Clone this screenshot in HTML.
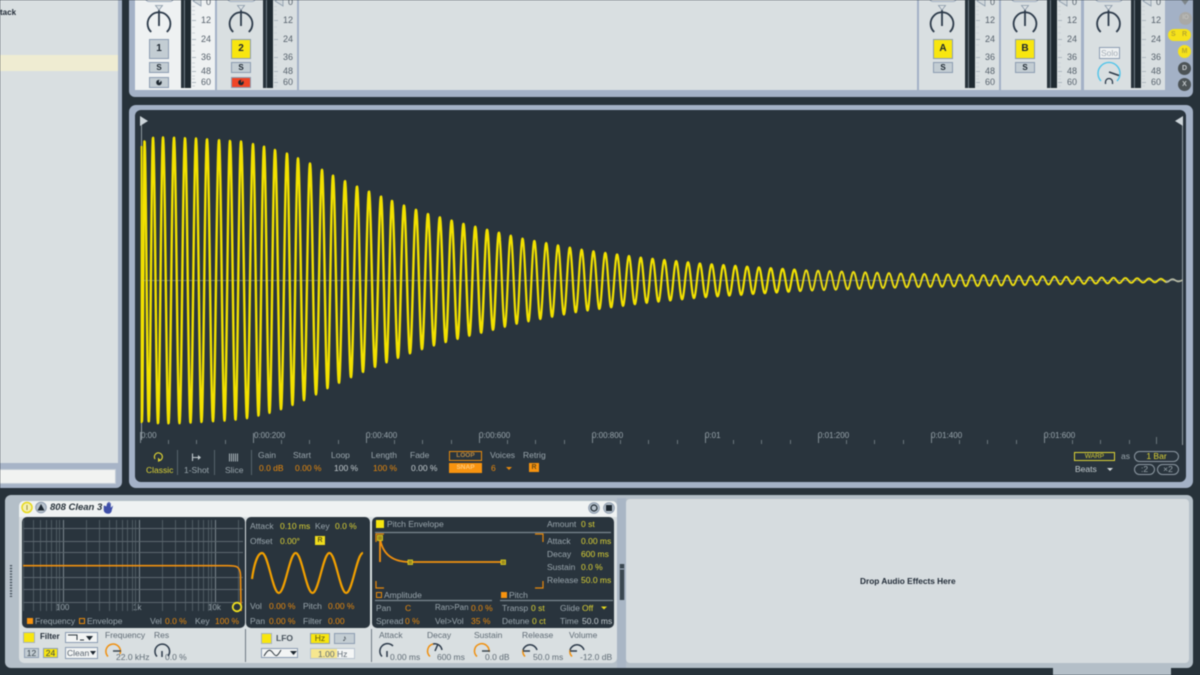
<!DOCTYPE html>
<html><head><meta charset="utf-8"><style>
html,body{margin:0;padding:0;background:#27323a}
#r{position:relative;width:1200px;height:675px;overflow:hidden;background:#27323a;font-family:"Liberation Sans",sans-serif;font-size:8.5px;filter:blur(.4px)}
.b{position:absolute;box-sizing:border-box}
.t{position:absolute;white-space:nowrap;line-height:10px;color:#9aa6ad}
.o{color:#e8890c}.y{color:#dcd234}.w{color:#c4ccd0}.g{color:#5f6b75}.k{color:#222c38;font-weight:bold}
.n{position:absolute;width:20px;text-align:right;line-height:10px;color:#56616c;font-size:9px}
.btn{position:absolute;box-sizing:border-box;border:1px solid #8c9db2;text-align:center;color:#1c2630;font-weight:bold;background:#c3cdd3}
svg{position:absolute;left:0;top:0}
</style></head><body><div id="r">

<!-- left panel -->
<div class="b" style="left:-10px;top:-10px;width:132px;height:498px;background:#a7b4c7;border-radius:6px"></div>
<div class="b" style="left:0;top:0;width:118px;height:463px;background:#d9dfe1"></div>
<div class="b" style="left:0;top:55px;width:118px;height:16px;background:#efecd2"></div>
<div class="t k" style="left:0;top:8px;font-size:8px">tack</div>
<div class="b" style="left:-4px;top:469px;width:120px;height:15px;background:#f1f3f1;border:1px solid #c3ccd6"></div>

<!-- mixer -->
<div class="b" style="left:129px;top:-10px;width:1064px;height:107px;background:#a3b1c6;border-radius:6px"></div>
<div class="b" style="left:135px;top:0;width:80px;height:90px;background:#eef1f2"></div>
<div class="b" style="left:217px;top:0;width:80px;height:90px;background:#d9dfe1"></div>
<div class="b" style="left:299px;top:0;width:618px;height:90px;background:#d9dfe1"></div>
<div class="b" style="left:919px;top:0;width:80px;height:90px;background:#d9dfe1"></div>
<div class="b" style="left:1001px;top:0;width:80px;height:90px;background:#d9dfe1"></div>
<div class="b" style="left:1084px;top:0;width:81px;height:90px;background:#d9dfe1"></div>

<!-- top pills -->
<div class="b" style="left:145px;top:-6px;width:29px;height:8px;background:#f4f6f6;border:1px solid #9aa9bb;border-radius:4px"></div>
<div class="b" style="left:227px;top:-6px;width:29px;height:8px;background:#f4f6f6;border:1px solid #9aa9bb;border-radius:4px"></div>
<div class="b" style="left:929px;top:-6px;width:28px;height:8px;background:#f4f6f6;border:1px solid #9aa9bb;border-radius:4px"></div>
<div class="b" style="left:1011px;top:-6px;width:28px;height:8px;background:#f4f6f6;border:1px solid #9aa9bb;border-radius:4px"></div>
<div class="b" style="left:1095px;top:-6px;width:28px;height:8px;background:#f4f6f6;border:1px solid #9aa9bb;border-radius:4px"></div>

<!-- meters -->
<div class="b" style="left:181px;top:0;width:10px;height:88px;background:linear-gradient(90deg,#27323a 0 3px,#6f7c85 3px 4px,#1f2a31 4px)"></div>
<div class="b" style="left:263px;top:0;width:10px;height:88px;background:linear-gradient(90deg,#27323a 0 3px,#6f7c85 3px 4px,#1f2a31 4px)"></div>
<div class="b" style="left:965px;top:0;width:10px;height:88px;background:linear-gradient(90deg,#27323a 0 3px,#6f7c85 3px 4px,#1f2a31 4px)"></div>
<div class="b" style="left:1047px;top:0;width:10px;height:88px;background:linear-gradient(90deg,#27323a 0 3px,#6f7c85 3px 4px,#1f2a31 4px)"></div>
<div class="b" style="left:1131px;top:0;width:10px;height:88px;background:linear-gradient(90deg,#27323a 0 3px,#6f7c85 3px 4px,#1f2a31 4px)"></div>

<!-- scales -->
<div class="n" style="left:191px;top:-3px">0</div><div class="n" style="left:191px;top:15px">12</div><div class="n" style="left:191px;top:34px">24</div><div class="n" style="left:191px;top:52px">36</div><div class="n" style="left:191px;top:66px">48</div><div class="n" style="left:191px;top:77px">60</div>
<div class="n" style="left:273px;top:-3px">0</div><div class="n" style="left:273px;top:15px">12</div><div class="n" style="left:273px;top:34px">24</div><div class="n" style="left:273px;top:52px">36</div><div class="n" style="left:273px;top:66px">48</div><div class="n" style="left:273px;top:77px">60</div>
<div class="n" style="left:975px;top:-3px">0</div><div class="n" style="left:975px;top:15px">12</div><div class="n" style="left:975px;top:34px">24</div><div class="n" style="left:975px;top:52px">36</div><div class="n" style="left:975px;top:66px">48</div><div class="n" style="left:975px;top:77px">60</div>
<div class="n" style="left:1057px;top:-3px">0</div><div class="n" style="left:1057px;top:15px">12</div><div class="n" style="left:1057px;top:34px">24</div><div class="n" style="left:1057px;top:52px">36</div><div class="n" style="left:1057px;top:66px">48</div><div class="n" style="left:1057px;top:77px">60</div>
<div class="n" style="left:1141px;top:-3px">0</div><div class="n" style="left:1141px;top:15px">12</div><div class="n" style="left:1141px;top:34px">24</div><div class="n" style="left:1141px;top:52px">36</div><div class="n" style="left:1141px;top:66px">48</div><div class="n" style="left:1141px;top:77px">60</div>

<!-- strip buttons -->
<div class="btn" style="left:149px;top:39px;width:20px;height:20px;line-height:18px;font-size:10px">1</div>
<div class="btn" style="left:149px;top:62px;width:20px;height:11px;line-height:9px;font-size:8px">S</div>
<div class="btn" style="left:149px;top:77px;width:20px;height:11px;line-height:9px;font-size:8px"></div>
<div class="btn" style="left:231px;top:39px;width:20px;height:20px;line-height:18px;font-size:10px;background:#f8e60f">2</div>
<div class="btn" style="left:231px;top:62px;width:20px;height:11px;line-height:9px;font-size:8px">S</div>
<div class="btn" style="left:231px;top:77px;width:20px;height:11px;background:#ef4526"></div>
<div class="btn" style="left:933px;top:39px;width:20px;height:20px;line-height:18px;font-size:10px;background:#f8e60f">A</div>
<div class="btn" style="left:933px;top:62px;width:20px;height:11px;line-height:9px;font-size:8px">S</div>
<div class="btn" style="left:1015px;top:39px;width:20px;height:20px;line-height:18px;font-size:10px;background:#f8e60f">B</div>
<div class="btn" style="left:1015px;top:62px;width:20px;height:11px;line-height:9px;font-size:8px">S</div>
<div class="btn" style="left:1099px;top:47px;width:21px;height:12px;line-height:10px;font-size:8.5px;background:#eef1f2;color:#a4adb6;font-weight:normal">Solo</div>

<!-- side buttons -->
<div class="b" style="left:1179px;top:12px;width:13px;height:13px;border-radius:7px;background:#a9a9a6;color:#c8c8c4;font-size:6px;line-height:13px;text-align:center">IO</div>
<div class="b" style="left:1168px;top:29px;width:23px;height:12px;border-radius:6px;background:#f6e21a"></div>
<div class="t" style="left:1171px;top:30px;font-size:7px;font-weight:bold;color:#b9a92b">S</div>
<div class="t" style="left:1182px;top:30px;font-size:7px;font-weight:bold;color:#b9a92b">R</div>
<div class="b" style="left:1178px;top:45px;width:13px;height:13px;border-radius:7px;background:#f6e21a;color:#b9a92b;font-size:7px;line-height:13px;text-align:center;font-weight:bold">M</div>
<div class="b" style="left:1178px;top:62px;width:13px;height:13px;border-radius:7px;background:#4c5356;color:#c5cacc;font-size:7px;line-height:13px;text-align:center;font-weight:bold">D</div>
<div class="b" style="left:1178px;top:78px;width:13px;height:13px;border-radius:7px;background:#4c5356;color:#c5cacc;font-size:7px;line-height:13px;text-align:center;font-weight:bold">X</div>

<!-- waveform panel -->
<div class="b" style="left:129px;top:105px;width:1064px;height:383px;background:#a3b1c6;border-radius:7px"></div>
<div class="b" style="left:135px;top:110px;width:1051px;height:372px;background:#29343d;border-radius:6px"></div>

<div class="t" style="left:141px;top:431px;font-size:8px">0:00</div>
<div class="t" style="left:254px;top:431px;font-size:8px">0:00:200</div>
<div class="t" style="left:366px;top:431px;font-size:8px">0:00:400</div>
<div class="t" style="left:479px;top:431px;font-size:8px">0:00:600</div>
<div class="t" style="left:592px;top:431px;font-size:8px">0:00:800</div>
<div class="t" style="left:705px;top:431px;font-size:8px">0:01</div>
<div class="t" style="left:818px;top:431px;font-size:8px">0:01:200</div>
<div class="t" style="left:931px;top:431px;font-size:8px">0:01:400</div>
<div class="t" style="left:1044px;top:431px;font-size:8px">0:01:600</div>

<div class="t y" style="left:146px;top:465px">Classic</div>
<div class="t" style="left:184px;top:465px">1-Shot</div>
<div class="t" style="left:225px;top:465px">Slice</div>
<div class="t" style="left:258px;top:450px">Gain</div>
<div class="t" style="left:293px;top:450px">Start</div>
<div class="t" style="left:331px;top:450px">Loop</div>
<div class="t" style="left:371px;top:450px">Length</div>
<div class="t" style="left:410px;top:450px">Fade</div>
<div class="t o" style="left:259px;top:463px">0.0 dB</div>
<div class="t o" style="left:295px;top:463px">0.00 %</div>
<div class="t w" style="left:334px;top:463px">100 %</div>
<div class="t o" style="left:373px;top:463px">100 %</div>
<div class="t w" style="left:411px;top:463px">0.00 %</div>
<div class="b" style="left:449px;top:451px;width:33px;height:10px;border:1px solid #e8890c;color:#b98a45;font-size:6.5px;line-height:8px;text-align:center;font-weight:bold">LOOP</div>
<div class="b" style="left:449px;top:463px;width:33px;height:10px;background:#f7930f;color:#ffc877;font-size:6.5px;line-height:10px;text-align:center;font-weight:bold">SNAP</div>
<div class="t" style="left:490px;top:450px">Voices</div>
<div class="t o" style="left:491px;top:463px">6</div>
<div class="t" style="left:523px;top:450px">Retrig</div>
<div class="b" style="left:529px;top:463px;width:10px;height:9px;background:#f7930f;color:#6b4a14;font-size:7px;line-height:9px;text-align:center;font-weight:bold">R</div>

<div class="b" style="left:1074px;top:452px;width:41px;height:9px;border:1px solid #dcd234;color:#dcd234;font-size:6.5px;line-height:7px;text-align:center">WARP</div>
<div class="t" style="left:1121px;top:451px">as</div>
<div class="b" style="left:1134px;top:451px;width:45px;height:11px;border:1px solid #8c98a2;border-radius:6px;color:#dcd234;line-height:9px;text-align:center">1 Bar</div>
<div class="t w" style="left:1075px;top:464px">Beats</div>
<div class="b" style="left:1134px;top:464px;width:21px;height:11px;border:1px solid #8c98a2;border-radius:6px;color:#9aa6ad;line-height:9px;text-align:center">:2</div>
<div class="b" style="left:1157px;top:464px;width:22px;height:11px;border:1px solid #8c98a2;border-radius:6px;color:#9aa6ad;line-height:9px;text-align:center">×2</div>

<!-- bottom area -->
<div class="b" style="left:5px;top:495px;width:1188px;height:173px;background:#b4bfc8;border-radius:6px"></div>
<div class="b" style="left:617px;top:498px;width:9px;height:170px;background:#a9b6c5"></div>
<div class="b" style="left:1053px;top:664px;width:118px;height:11px;background:#b4bfc8"></div>
<div class="b" style="left:19px;top:501px;width:598px;height:162px;background:#d9dfe1;border-radius:5px"></div>
<div class="b" style="left:19px;top:501px;width:598px;height:16px;background:#eff2f2;border-radius:5px 5px 0 0"></div>
<div class="b" style="left:626px;top:499px;width:563px;height:164px;background:#d6dcdf;border-radius:4px"></div>
<div class="t k" style="left:860px;top:576px;font-size:8.3px">Drop Audio Effects Here</div>
<div class="t" style="left:50px;top:503px;font-size:9.5px;font-weight:bold;font-style:italic;color:#27323a">808 Clean 3</div>

<!-- displays -->
<div class="b" style="left:22px;top:517px;width:223px;height:111px;background:#29343d;border-radius:5px"></div>
<div class="b" style="left:246px;top:517px;width:124px;height:111px;background:#29343d;border-radius:5px"></div>
<div class="b" style="left:372px;top:517px;width:242px;height:111px;background:#29343d;border-radius:5px"></div>

<!-- filter text -->
<div class="t" style="left:56px;top:603px;font-size:8px">100</div>
<div class="t" style="left:133px;top:603px;font-size:8px">1k</div>
<div class="t" style="left:208px;top:603px;font-size:8px">10k</div>
<div class="b" style="left:27px;top:618px;width:6px;height:6px;background:#f7930f"></div>
<div class="t" style="left:35px;top:616px">Frequency</div>
<div class="b" style="left:79px;top:618px;width:6px;height:6px;border:1px solid #e8890c"></div>
<div class="t" style="left:87px;top:616px">Envelope</div>
<div class="t" style="left:150px;top:616px">Vel</div>
<div class="t o" style="left:165px;top:616px">0.0 %</div>
<div class="t" style="left:195px;top:616px">Key</div>
<div class="t o" style="left:215px;top:616px">100 %</div>

<div class="btn" style="left:23px;top:632px;width:12px;height:11px;background:#f8e60f;border-color:#a6b2bd"></div>
<div class="t k" style="left:40px;top:632px;font-size:8px">Filter</div>
<div class="b" style="left:65px;top:632px;width:33px;height:11px;background:#f2f4f4;border:1px solid #8c9db2"></div>
<div class="btn" style="left:24px;top:648px;width:15px;height:10px;line-height:8px;font-weight:normal;color:#39444e">12</div>
<div class="btn" style="left:43px;top:648px;width:15px;height:10px;line-height:8px;font-weight:normal;background:#f8e60f;color:#39444e">24</div>
<div class="b" style="left:65px;top:647px;width:33px;height:12px;background:#f2f4f4;border:1px solid #8c9db2;color:#56616c;line-height:10px;padding-left:1px">Clean</div>
<div class="t g" style="left:105px;top:630px">Frequency</div>
<div class="t g" style="left:154px;top:630px">Res</div>
<div class="t g" style="left:116px;top:652px">22.0 kHz</div>
<div class="t g" style="left:165px;top:652px">0.0 %</div>

<!-- LFO text -->
<div class="t" style="left:250px;top:521px">Attack</div>
<div class="t y" style="left:280px;top:521px">0.10 ms</div>
<div class="t" style="left:315px;top:521px">Key</div>
<div class="t y" style="left:335px;top:521px">0.0 %</div>
<div class="t" style="left:250px;top:536px">Offset</div>
<div class="t y" style="left:280px;top:536px">0.00°</div>
<div class="b" style="left:315px;top:536px;width:10px;height:9px;background:#f0dc1c;color:#5c5518;font-size:7px;line-height:9px;text-align:center;font-weight:bold">R</div>
<div class="t" style="left:250px;top:601px">Vol</div>
<div class="t o" style="left:269px;top:601px">0.00 %</div>
<div class="t" style="left:303px;top:601px">Pitch</div>
<div class="t o" style="left:328px;top:601px">0.00 %</div>
<div class="t" style="left:250px;top:616px">Pan</div>
<div class="t o" style="left:269px;top:616px">0.00 %</div>
<div class="t" style="left:303px;top:616px">Filter</div>
<div class="t o" style="left:328px;top:616px">0.00</div>
<div class="btn" style="left:261px;top:633px;width:11px;height:11px;background:#f8e60f;border-color:#a6b2bd"></div>
<div class="t k" style="left:276px;top:633px;font-size:8.5px;color:#47525c">LFO</div>
<div class="b" style="left:261px;top:648px;width:37px;height:10px;background:#f2f4f4;border:1px solid #8c9db2"></div>
<div class="btn" style="left:310px;top:633px;width:20px;height:11px;line-height:9px;background:#f8e60f;font-weight:normal;color:#5c5518">Hz</div>
<div class="btn" style="left:334px;top:633px;width:21px;height:11px;line-height:9px;font-weight:normal">♪</div>
<div class="b" style="left:310px;top:648px;width:45px;height:11px;background:linear-gradient(90deg,#f6e78f 0 26px,#f4f6f6 26px);border:1px solid #b9c4d0"></div>
<div class="t g" style="left:318px;top:649px">1.00</div>
<div class="t g" style="left:337px;top:649px">Hz</div>

<!-- Pitch env text -->
<div class="b" style="left:376px;top:520px;width:8px;height:8px;background:#f8e60f"></div>
<div class="t" style="left:387px;top:519px">Pitch Envelope</div>
<div class="t" style="left:547px;top:519px">Amount</div>
<div class="t y" style="left:581px;top:519px">0 st</div>
<div class="t" style="left:547px;top:536px">Attack</div><div class="t y" style="left:581px;top:536px">0.00 ms</div>
<div class="t" style="left:547px;top:549px">Decay</div><div class="t y" style="left:581px;top:549px">600 ms</div>
<div class="t" style="left:547px;top:562px">Sustain</div><div class="t y" style="left:581px;top:562px">0.0 %</div>
<div class="t" style="left:547px;top:575px">Release</div><div class="t y" style="left:581px;top:575px">50.0 ms</div>
<div class="b" style="left:376px;top:592px;width:6px;height:6px;border:1px solid #e8890c"></div>
<div class="t" style="left:384px;top:590px">Amplitude</div>
<div class="b" style="left:501px;top:592px;width:6px;height:6px;background:#f7930f"></div>
<div class="t" style="left:509px;top:590px">Pitch</div>
<div class="t" style="left:376px;top:603px">Pan</div><div class="t o" style="left:405px;top:603px">C</div>
<div class="t" style="left:435px;top:603px;font-size:8px">Ran&gt;Pan</div><div class="t o" style="left:471px;top:603px">0.0 %</div>
<div class="t" style="left:502px;top:603px">Transp</div><div class="t y" style="left:531px;top:603px">0 st</div>
<div class="t" style="left:560px;top:603px">Glide</div><div class="t y" style="left:582px;top:603px">Off</div>
<div class="t" style="left:376px;top:616px">Spread</div><div class="t o" style="left:405px;top:616px">0 %</div>
<div class="t" style="left:435px;top:616px">Vel&gt;Vol</div><div class="t o" style="left:471px;top:616px">35 %</div>
<div class="t" style="left:502px;top:616px">Detune</div><div class="t y" style="left:532px;top:616px">0 ct</div>
<div class="t" style="left:560px;top:616px">Time</div><div class="t w" style="left:582px;top:616px">50.0 ms</div>

<div class="t g" style="left:379px;top:630px">Attack</div>
<div class="t g" style="left:427px;top:630px">Decay</div>
<div class="t g" style="left:474px;top:630px">Sustain</div>
<div class="t g" style="left:522px;top:630px">Release</div>
<div class="t g" style="left:569px;top:630px">Volume</div>
<div class="t g" style="left:390px;top:652px">0.00 ms</div>
<div class="t g" style="left:437px;top:652px">600 ms</div>
<div class="t g" style="left:485px;top:652px">0.0 dB</div>
<div class="t g" style="left:533px;top:652px">50.0 ms</div>
<div class="t g" style="left:580px;top:652px">-12.0 dB</div>

<svg width="1200" height="675" viewBox="0 0 1200 675" fill="none">
<defs>
<g id="pk" stroke="#2c3a4a" stroke-width="1.8" fill="none">
<path d="M-7.8 8a11.4 11.4 0 1 1 15.6 0"/><path d="M0 -14V2"/><path d="M-3.5-18.5H3.5L0-14Z" stroke="#8796a6" stroke-width=".8" fill="#dfe4e6"/>
</g>
<g id="tk" stroke="#c0c8ce" stroke-width="1">
<path d="M0 20.500H4M0 39.500H4M0 57.500H4M0 71.500H4M0 82.500H4" stroke="#adb7bf"/>
<path d="M0 6.500H3M0 10.500H3M0 14.500H3M0 27H3M0 33H3M0 45H3M0 51H3M0 63H3M0 67H3M0 76H3M0 79H3M0 86H3" stroke="#ccd3d8"/>
<path d="M1 1L9-4V6Z" fill="#cfd6da" stroke="#8c9bab" stroke-width=".8"/>
</g>
</defs>
<use href="#pk" x="159" y="24"/><use href="#pk" x="241" y="24"/><use href="#pk" x="942" y="24"/><use href="#pk" x="1025" y="24"/><use href="#pk" x="1108.5" y="24"/>
<use href="#tk" x="192"/><use href="#tk" x="274"/><use href="#tk" x="976"/><use href="#tk" x="1058"/><use href="#tk" x="1142"/>
<!-- arm icons -->
<circle cx="159" cy="82.500" r="2.800" fill="#1d2730"/><path d="M159 80L161.500 80.500 159 83Z" fill="#c3cdd3"/>
<circle cx="241" cy="82.500" r="2.800" fill="#1d2730"/><path d="M241 80L243.500 80.500 241 83Z" fill="#ef4526"/>
<!-- cue knob -->
<path d="M1101 81a11 11 0 1 1 16 0" stroke="#4fc4ea" stroke-width="1.400"/>
<path d="M1109 72l10 3.500" stroke="#2c3a4a" stroke-width="1.600"/>
<path d="M1105.500 84v-2a3.500 3.500 0 0 1 7 0v2" stroke="#2c3a4a" stroke-width="1.300"/>
<path d="M1180.500 -1H1189.500L1185 5Z" fill="#7d8589"/>

<!-- waveform -->
<path d="M141.500 118V440M1182.500 118V445" stroke="#8f999f" stroke-width="1"/>
<path d="M140 116L148 121 140 126Z" fill="#ccd4d9"/><path d="M1183 116L1175 121 1183 126Z" fill="#ccd4d9"/>
<path d="M141 280.500H1182" stroke="#566169" stroke-width="1"/>
<path d="M141.500 146L141.500 423" stroke="#f2e100" stroke-width="1.800"/>
<g id="wave" fill="none" stroke="#f2e100" stroke-linejoin="round" stroke-linecap="round"></g>
<path d="M141 280.500H1182" stroke="#c8ccb8" stroke-width=".7" opacity=".2"/>
<path d="M140.500 432V443M253.500 433V443M366.500 433V443M479.500 433V443M592.500 433V443M705.500 433V443M818.500 433V443M931.500 433V443M1044.500 433V443" stroke="#7d8890"/>
<path d="M168.500 440V444M196.500 440V444M225.500 440V444M281.500 440V444M309.500 440V444M338.500 440V444M394.500 440V444M422.500 440V444M451.500 440V444M507.500 440V444M535.500 440V444M564.500 440V444M620.500 440V444M648.500 440V444M677.500 440V444M733.500 440V444M761.500 440V444M790.500 440V444M846.500 440V444M874.500 440V444M903.500 440V444M959.500 440V444M987.500 440V444M1016.500 440V444M1072.500 440V444M1100.500 440V444M1129.500 440V444M1156.500 437V444" stroke="#6a757d"/>
<path d="M177.500 450V475M214.500 450V475M251.500 450V475" stroke="#56626b"/>
<!-- toolbar icons -->
<path d="M155 459a4 4 0 1 1 5 1.500" stroke="#dcd234" stroke-width="1.200"/><path d="M158 457.500l3 3-3 1.500Z" fill="#dcd234"/>
<path d="M192.500 453.500V461M193 457.500H199" stroke="#c4ccd0" stroke-width="1.100"/><path d="M198 455l3 2.500-3 2.500Z" fill="#c4ccd0"/>
<path d="M229.500 453.500V461.500M231.500 453.500V461.500M233.500 453.500V461.500M235.500 453.500V461.500M237.500 453.500V461.500" stroke="#aab4ba"/>
<path d="M506 467h6l-3 3Z" fill="#e8890c"/><path d="M1107 468h6l-3 3Z" fill="#d0d6da"/>

<!-- device header -->
<circle cx="27" cy="507.500" r="5" fill="#f5f0b0" stroke="#e7d91c" stroke-width="1.500"/><path d="M27 505V510" stroke="#9b9440"/>
<circle cx="41" cy="507.500" r="5.300" fill="#b6c1cb" stroke="#8e9cae"/><path d="M37.500 510.500L41 504 44.500 510.500Z" fill="#1d2730"/>
<path d="M104 506v4c0 2 2 3.500 4 3.500s3.500-1.500 3.500-3.500l1-3.500-2 2V503l-1 3.500v-4.500l-1 4.500v-4.500l-1 4.500v-3.500l-1 4-1.500-1Z" fill="#3f4fa8" stroke="#3f4fa8" stroke-width=".6"/>
<circle cx="594" cy="508" r="5.300" fill="#b6c1cb" stroke="#8e9cae"/><path d="M591 508a3 3 0 0 1 6 0M597 508a3 3 0 0 1-6 0" stroke="#1d2730" stroke-width="1.200"/>
<circle cx="609" cy="508" r="5.300" fill="#b6c1cb" stroke="#8e9cae"/><rect x="606" y="505" width="6" height="6" fill="#1d2730"/>
<path d="M11 565V597" stroke="#4a5660" stroke-width="2.200" stroke-dasharray="1.400 1.400"/>
<path d="M622 564V600" stroke="#3a4750" stroke-width="4.500"/><path d="M620 569H624" stroke="#a9b6c5"/>

<!-- filter grid -->
<path d="M23.500 520V611M33.500 520V611M40.500 520V611M46.500 520V611M51.500 520V611M56.500 520V611M59.500 520V611M86.500 520V611M99.500 520V611M109.500 520V611M116.500 520V611M122.500 520V611M127.500 520V611M132.500 520V611M135.500 520V611M162.500 520V611M175.500 520V611M185.500 520V611M192.500 520V611M198.500 520V611M203.500 520V611M208.500 520V611M211.500 520V611M238.500 520V611" stroke="#4f5b63"/>
<path d="M63.500 520V602M139.500 520V602M215.500 520V602" stroke="#79848c"/>
<path d="M23 528.500H243M23 541.500H243M23 552.500H243M23 577.500H243M23 589.500H243M23 602.500H243" stroke="#5c676f"/>
<path d="M23 565.700H228C236 565.700 240 566 240.500 575L241 611" stroke="#f0900f" stroke-width="1.600"/>
<circle cx="237" cy="607" r="4.300" fill="#29343d" stroke="#f0e020" stroke-width="1.800"/>
<path d="M245.500 629V662M371.500 629V662" stroke="#6f7a84"/>
<path d="M68 635H77V640M80 640H84" stroke="#2a343c" stroke-width="1"/><path d="M86 636h7l-3.500 4.500Z" fill="#1d2730"/>
<path d="M90 651h6l-3 4Z" fill="#1d2730"/>
<path d="M264 656C268 649 270 649 273 653S277 657 281 650" stroke="#2a343c" stroke-width="1"/><path d="M290 651h7l-3.500 4Z" fill="#1d2730"/>

<!-- knobs -->
<path d="M108 656.500A7.300 7.300 0 1 1 120 654" stroke="#f0900f" stroke-width="1.500"/><path d="M113 651H121" stroke="#3a4650" stroke-width="1.500"/>
<path d="M157 656.500A7.300 7.300 0 1 1 168 656" stroke="#2c3a4a" stroke-width="1.500"/><path d="M162 651V657" stroke="#2c3a4a" stroke-width="1.500"/>
<path d="M382 656.500A7.300 7.300 0 1 1 393 646" stroke="#2c3a4a" stroke-width="1.500"/><path d="M387 651V657" stroke="#2c3a4a" stroke-width="1.500"/>
<path d="M430 656.500A7.300 7.300 0 0 1 433 644" stroke="#f0900f" stroke-width="1.500"/><path d="M433 644A7.300 7.300 0 0 1 442 650" stroke="#2c3a4a" stroke-width="1.500"/><path d="M435 651L438 644" stroke="#2c3a4a" stroke-width="1.500"/>
<path d="M477 656.500A7.300 7.300 0 1 1 489 652" stroke="#f0900f" stroke-width="1.500"/><path d="M482 651H490" stroke="#3a4650" stroke-width="1.500"/>
<path d="M525 656.500A7.300 7.300 0 0 1 523 650" stroke="#f0900f" stroke-width="1.500"/><path d="M523 650A7.300 7.300 0 0 1 537 650" stroke="#2c3a4a" stroke-width="1.500"/><path d="M523 651H530" stroke="#2c3a4a" stroke-width="1.500"/>
<path d="M572 656.500A7.300 7.300 0 0 1 570 650" stroke="#f0900f" stroke-width="1.500"/><path d="M570 650A7.300 7.300 0 0 1 584 650" stroke="#2c3a4a" stroke-width="1.500"/><path d="M570 651H577" stroke="#2c3a4a" stroke-width="1.500"/>

<!-- LFO sine -->
<path d="M252 579C254 565 257.500 553 262 553C268.200 553 272.600 593 278.800 593C285 593 289.500 553 295.700 553C301.900 553 306.300 593 312.500 593C318.700 593 323.200 553 329.400 553C335.600 553 340 593 346.200 593C352.400 593 356.800 553 363 553" stroke="#f2a000" stroke-width="2.200"/>

<!-- pitch env -->
<path d="M375 532.500H611M375 600.500H492M500 600.500H613" stroke="#7b8790" stroke-width="1.200"/>
<path d="M535 534H543V542M376 581V588H384M535 588H543V581M376 542V534H384" stroke="#e8890c" stroke-width="1.200"/>
<path d="M380 538C382 552 390 562 410 562H503M380 538V562" stroke="#f0900f" stroke-width="1.800"/>
<path d="M377.500 535.500h5v5h-5zM408 560h4.500v4.500H408zM501 560h4.500v4.500H501z" fill="#9d8a1e" stroke="#e7d91c" stroke-width=".8"/>
<path d="M601 606.500h6l-3 3Z" fill="#e7d91c"/>
</svg>
<script>
var P=[139.5,144.5,153,163,174,185,196,207,219,230,241,253,264,275,287,298,310,322,333,345,357,369,381,392,404,416,428];
while(P[P.length-1]<1200)P.push(P[P.length-1]+11.82);
var A=[[141,141],[144,140],[153,143],[174,143],[196,142],[219,140.5],[241,139],[264,134],[287,127],[310,117],[333,105],[357,94],[381,84],[404,75],[428,66.5],[464,56.5],[522,42],[580,31],[640,23],[700,17],[760,13],[806,10.2],[900,7],[1000,5],[1100,3],[1170,1.5],[1182,0.8]];
function amp(x){for(var i=1;i<A.length;i++)if(x<=A[i][0]){var a=A[i-1],b=A[i];return a[1]+(b[1]-a[1])*(x-a[0])/(b[0]-a[0]);}return .8;}
function seg(x0,x1,w,col){var d="",k=0;for(var x=x0;x<=x1;x+=.3){while(P[k+1]<x)k++;var ph=2*Math.PI*(x-P[k])/(P[k+1]-P[k]);var y=280.5-amp(x)*Math.cos(ph);d+=(d?"L":"M")+x.toFixed(1)+" "+y.toFixed(1);}
var p=document.createElementNS("http://www.w3.org/2000/svg","path");p.setAttribute("d",d);p.setAttribute("stroke-width",w);p.setAttribute("stroke",col);document.getElementById("wave").appendChild(p);}
seg(142,500,2.4,"#f2e100");seg(500,800,2.2,"#f2e100");seg(800,1166,1.9,"#ecdc10");seg(1166,1182,1.6,"#b9bca6");
</script>
</div></body></html>
